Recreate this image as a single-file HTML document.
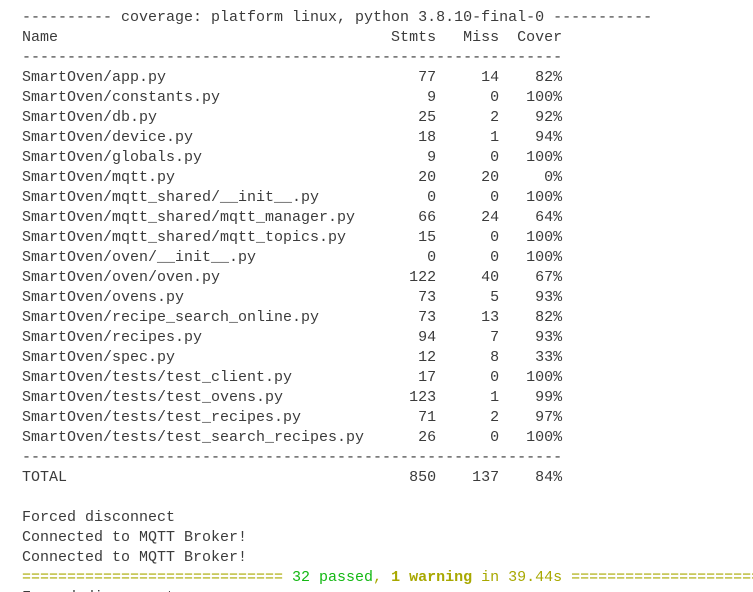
<!DOCTYPE html>
<html><head><meta charset="utf-8"><style>
html,body{margin:0;padding:0;background:#fff;width:753px;height:592px;overflow:hidden}
pre{margin:0;padding:8px 0 0 22px;width:731px;height:584px;overflow:hidden;font-family:"Liberation Mono",monospace;font-size:15px;line-height:20px;color:#3b3b3b;white-space:pre}
.y{color:#a8a800}.g{color:#14b814}.b{font-weight:bold}
</style></head><body><pre>---------- coverage: platform linux, python 3.8.10-final-0 -----------
Name                                     Stmts   Miss  Cover
------------------------------------------------------------
SmartOven/app.py                            77     14    82%
SmartOven/constants.py                       9      0   100%
SmartOven/db.py                             25      2    92%
SmartOven/device.py                         18      1    94%
SmartOven/globals.py                         9      0   100%
SmartOven/mqtt.py                           20     20     0%
SmartOven/mqtt_shared/__init__.py            0      0   100%
SmartOven/mqtt_shared/mqtt_manager.py       66     24    64%
SmartOven/mqtt_shared/mqtt_topics.py        15      0   100%
SmartOven/oven/__init__.py                   0      0   100%
SmartOven/oven/oven.py                     122     40    67%
SmartOven/ovens.py                          73      5    93%
SmartOven/recipe_search_online.py           73     13    82%
SmartOven/recipes.py                        94      7    93%
SmartOven/spec.py                           12      8    33%
SmartOven/tests/test_client.py              17      0   100%
SmartOven/tests/test_ovens.py              123      1    99%
SmartOven/tests/test_recipes.py             71      2    97%
SmartOven/tests/test_search_recipes.py      26      0   100%
------------------------------------------------------------
TOTAL                                      850    137    84%

Forced disconnect
Connected to MQTT Broker!
Connected to MQTT Broker!
<span class="y">============================= </span><span class="g">32 passed</span><span class="y">, </span><span class="y b">1 warning</span><span class="y"> in 39.44s ============================</span>
Forced disconnect</pre></body></html>
